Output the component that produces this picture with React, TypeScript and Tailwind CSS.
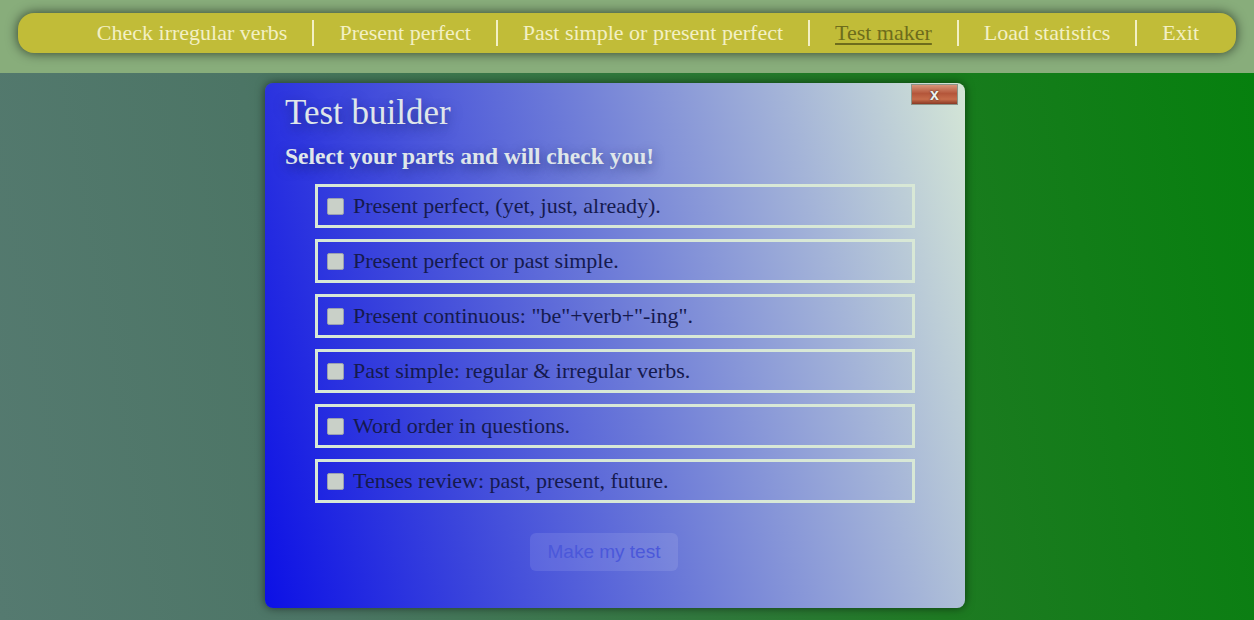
import { useState } from 'react'

const navItems = [
  { label: 'Check irregular verbs' },
  { label: 'Present perfect' },
  { label: 'Past simple or present perfect' },
  { label: 'Test maker', active: true },
  { label: 'Load statistics' },
  { label: 'Exit' },
]

const parts = [
  'Present perfect, (yet, just, already).',
  'Present perfect or past simple.',
  'Present continuous: "be"+verb+"-ing".',
  'Past simple: regular & irregular verbs.',
  'Word order in questions.',
  'Tenses review: past, present, future.',
]

export default function App() {
  const [checked, setChecked] = useState<boolean[]>(parts.map(() => false))

  const toggle = (i: number) => setChecked((c) => c.map((v, j) => (j === i ? !v : v)))

  return (
    <div className="flex h-[620px] w-[1254px] flex-col overflow-hidden font-['Liberation_Serif',serif]">
      <header className="h-[73px] shrink-0 bg-[#88ad7b] px-[18px] pt-[13px]">
        <nav className="flex h-[40px] items-center justify-end rounded-[16px] bg-[#c1bc38] pr-[12px] shadow-[0_0_12px_rgba(0,0,0,0.65)]">
          {navItems.map((item, i) => (
            <div key={item.label} className="flex items-center">
              {i > 0 && <span className="h-[26px] w-[2px] bg-[#f3f0c4]" />}
              <a
                href="#"
                className={[
                  'px-[25px] text-[22px] leading-[26px]',
                  item.active ? 'text-[#6e6c1c] underline underline-offset-[3px]' : 'text-[#f3f0c4] no-underline',
                ].join(' ')}
              >
                {item.label}
              </a>
            </div>
          ))}
        </nav>
      </header>

      <main className="flex-1 bg-[linear-gradient(80deg,#557a70_0%,#4c7565_25%,#1e7a22_70%,#06800e_100%)] pt-[10px]">
        <section className="relative ml-[265px] flex h-[525px] w-[700px] flex-col rounded-[8px] bg-[linear-gradient(75deg,#0c10e6_0%,#3a44dc_25%,#6a78d8_50%,#a4b4d8_78%,#d4e6d6_100%)] px-[20px] shadow-[0_0_10px_rgba(0,0,0,0.55)]">
          <button className="absolute right-[7px] top-[1px] flex h-[21px] w-[47px] items-center justify-center border border-[#8a9488] bg-[linear-gradient(to_bottom,#d89478_0%,#b4563a_45%,#c66c4a_75%,#8a3a24_100%)] font-['Liberation_Sans',sans-serif] text-[16px] font-bold leading-none text-[#eef2ee] [text-shadow:0_0_2px_#222]">
            x
          </button>

          <h1 className="mt-[10px] text-[35px] leading-[40px] text-[#dfe6ea] [text-shadow:0_4px_12px_rgba(20,30,90,0.6)]">
            Test builder
          </h1>
          <h2 className="mt-[9px] text-[23.5px] font-bold leading-[28px] text-[#dfe6ea] [text-shadow:0_4px_12px_rgba(20,30,90,0.6)]">
            Select your parts and will check you!
          </h2>

          <div className="ml-[30px] mt-[14px] flex w-[600px] flex-col gap-[11px]">
            {parts.map((p, i) => (
              <label
                key={p}
                className="flex h-[44px] cursor-pointer items-center gap-[9px] border-[3px] border-[#d8e8d6] pl-[9px]"
              >
                <span
                  onClick={() => toggle(i)}
                  className={[
                    'h-[17px] w-[17px] shrink-0 rounded-[2px] border border-[#9aa0b0]',
                    checked[i] ? 'bg-[#5b6bd8]' : 'bg-[#c9d0c8]',
                  ].join(' ')}
                />
                <span className="text-[22px] leading-[26px] text-[#151a4e]">{p}</span>
              </label>
            ))}
          </div>

          <div className="mt-[30px] flex justify-center pr-[22px]">
            <button className="h-[38px] w-[148px] rounded-[6px] bg-white/10 font-['Liberation_Sans',sans-serif] text-[19px] text-[#4b58da]">
              Make my test
            </button>
          </div>
        </section>
      </main>
    </div>
  )
}
